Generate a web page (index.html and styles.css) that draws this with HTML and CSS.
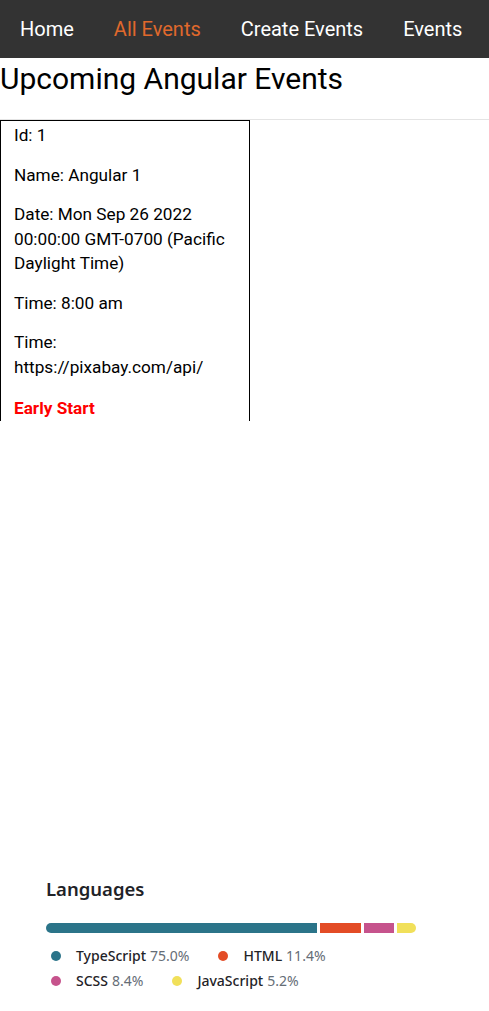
FILE: index.html
```html
<!DOCTYPE html>
<html lang="en">
<head>
<meta charset="utf-8">
<title>Upcoming Angular Events</title>
<link rel="stylesheet" href="styles.css">
</head>
<body>
  <nav class="navbar">
    <a class="nav-link" href="#">Home</a>
    <a class="nav-link active" href="#">All Events</a>
    <a class="nav-link" href="#">Create Events</a>
    <a class="nav-link" href="#">Events</a>
  </nav>
  <h1 class="page-title">Upcoming Angular Events</h1>
  <hr class="divider">
  <div class="event-card">
    <p class="field">Id: 1</p>
    <p class="field">Name: Angular 1</p>
    <p class="field">Date: Mon Sep 26 2022 00:00:00 GMT-0700 (Pacific Daylight Time)</p>
    <p class="field">Time: 8:00 am</p>
    <p class="field">Time: https://pixabay.com/api/</p>
    <p class="field early">Early Start</p>
  </div>

  <section class="languages">
    <h2 class="lang-title">Languages</h2>
    <div class="lang-bar">
      <span class="seg ts" style="flex-basis:75%"></span>
      <span class="seg html" style="flex-basis:11.4%"></span>
      <span class="seg scss" style="flex-basis:8.4%"></span>
      <span class="seg js" style="flex-basis:5.2%"></span>
    </div>
    <ul class="lang-list">
      <li class="lang-item"><span class="dot ts"></span><span class="lang-name">TypeScript</span><span class="lang-pct">75.0%</span></li>
      <li class="lang-item"><span class="dot html"></span><span class="lang-name">HTML</span><span class="lang-pct">11.4%</span></li>
      <li class="lang-item"><span class="dot scss"></span><span class="lang-name">SCSS</span><span class="lang-pct">8.4%</span></li>
      <li class="lang-item"><span class="dot js"></span><span class="lang-name">JavaScript</span><span class="lang-pct">5.2%</span></li>
    </ul>
  </section>
</body>
</html>
```

FILE: styles.css
```css
html, body {
  margin: 0;
  padding: 0;
  background: #fff;
}
body {
  font-family: Roboto, "Liberation Sans", sans-serif;
  color: #000;
}
.navbar {
  display: flex;
  align-items: center;
  height: 58px;
  background: #333333;
  padding: 0;
}
.nav-link {
  padding: 0 20px;
  font-size: 20px;
  color: #ffffff;
  text-decoration: none;
  line-height: 58px;
}
.nav-link.active {
  color: #e0692c;
}
.page-title {
  margin: 1px 0 0 0;
  font-size: 30px;
  font-weight: 400;
  line-height: 40px;
}
.divider {
  margin: 20px 0 0 0;
  border: 0;
  border-top: 1px solid #e4e4e4;
  height: 0;
}
.event-card {
  box-sizing: border-box;
  width: 250px;
  height: 301px;
  overflow: hidden;
  border: 1px solid #000;
  border-bottom: 0;
  padding: 2px 10px 0 13px;
}
.field {
  margin: 0 0 15px 0;
  font-size: 17.2px;
  line-height: 24.5px;
}
.early {
  color: #ff0000;
  font-weight: 700;
  margin-top: 17px;
}
.languages {
  margin: 455px 0 0 46px;
  width: 370px;
  font-family: "Noto Sans", "Open Sans", sans-serif;
}
.lang-title {
  margin: 0 0 21px 0;
  font-size: 18.5px;
  font-weight: 600;
  color: #1f2328;
  line-height: 26px;
}
.lang-bar {
  display: flex;
  gap: 3px;
  height: 10px;
  border-radius: 6px;
  overflow: hidden;
}
.seg {
  display: block;
  height: 100%;
  flex-grow: 0;
  flex-shrink: 1;
}
.ts { background: #2b7489; }
.html { background: #e34c26; }
.scss { background: #c6538c; }
.js { background: #f1e05a; }
.lang-list {
  list-style: none;
  margin: 12px 0 0 0;
  padding: 0;
  display: flex;
  flex-wrap: wrap;
  row-gap: 4px;
  width: 310px;
}
.lang-item {
  display: inline-flex;
  align-items: center;
  margin-right: 24px;
  font-size: 14px;
  line-height: 21px;
}
.dot {
  width: 10px;
  height: 10px;
  border-radius: 50%;
  margin: 0 15px 0 5px;
}
.lang-name {
  color: #1f2328;
  font-weight: 500;
  margin-right: 4px;
}
.lang-pct {
  color: #656d76;
}
```
